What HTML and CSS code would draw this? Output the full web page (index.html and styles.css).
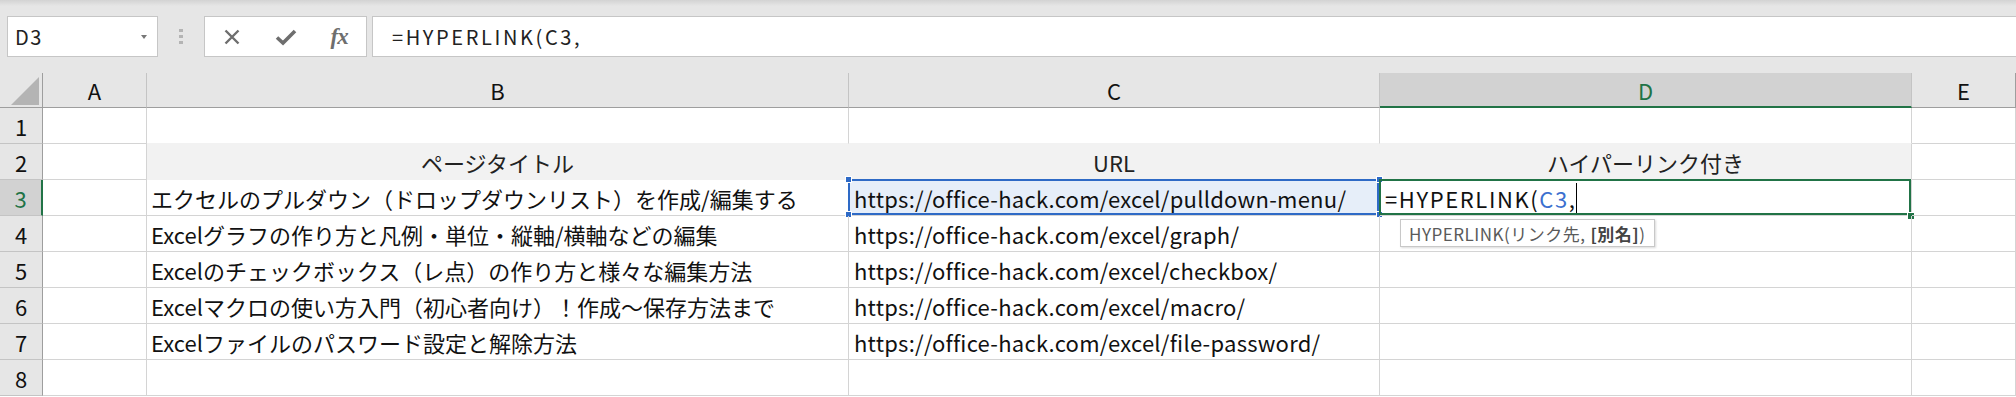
FILE: index.html
```html
<!DOCTYPE html>
<html lang="ja">
  <head>
    <meta charset="UTF-8" />
    <title>HYPERLINK</title>
    <link rel="stylesheet" href="styles.css">
  </head>
  <body>
    <div class="formula-bar">
      <div class="name-box">
        <span>D3</span>
        <span class="drop"></span>
      </div>
      <div class="grip"><i></i><i></i><i></i></div>
      <div class="fx-buttons">
        <span class="fx-btn">
          <svg width="18" height="18" viewBox="0 0 18 18">
            <path d="M2.5 2.5 L15.5 15.5 M15.5 2.5 L2.5 15.5" stroke="#6e6e6e" stroke-width="2.4" fill="none" />
          </svg>
        </span>
        <span class="fx-btn">
          <svg width="22" height="18" viewBox="0 0 22 18">
            <path d="M2 9.5 L8 15 L20 3" stroke="#6e6e6e" stroke-width="3.6" fill="none" />
          </svg>
        </span>
        <span class="fx-btn fx">fx</span>
      </div>
      <div class="formula-input">=HYPERLINK(C3,</div>
    </div>

    <div class="sheet">
      <!-- column headers -->
      <div class="corner"><span class="tri"></span></div>
      <div class="ch">A</div>
      <div class="ch">B</div>
      <div class="ch">C</div>
      <div class="ch ch-active">D</div>
      <div class="ch ch-last">E</div>

      <!-- row 1 -->
      <div class="rh">1</div>
      <div class="cell"></div>
      <div class="cell above-fill"></div>
      <div class="cell above-fill"></div>
      <div class="cell above-fill"></div>
      <div class="cell"></div>

      <!-- row 2 -->
      <div class="rh">2</div>
      <div class="cell"></div>
      <div class="cell th">ページタイトル</div>
      <div class="cell th">URL</div>
      <div class="cell th th-last">ハイパーリンク付き</div>
      <div class="cell"></div>

      <!-- row 3 -->
      <div class="rh rh-active">3</div>
      <div class="cell"></div>
      <div class="cell">エクセルのプルダウン（ドロップダウンリスト）を作成/編集する</div>
      <div class="cell url ref">
        https://office-hack.com/excel/pulldown-menu/
        <span class="ref-box"></span>
        <span class="knob tl"></span><span class="knob tr"></span>
        <span class="knob bl"></span><span class="knob br"></span>
      </div>
      <div class="cell edit">
        <span class="edit-text">=HYPERLINK(<span class="ref-text">C3</span>,</span><span class="caret"></span>
        <span class="active-box"></span>
        <span class="fill-handle"></span>
        <div class="tip">HYPERLINK(リンク先, <b>[別名]</b>)</div>
      </div>
      <div class="cell"></div>

      <!-- row 4 -->
      <div class="rh">4</div>
      <div class="cell"></div>
      <div class="cell">Excelグラフの作り方と凡例・単位・縦軸/横軸などの編集</div>
      <div class="cell url">https://office-hack.com/excel/graph/</div>
      <div class="cell"></div>
      <div class="cell"></div>

      <!-- row 5 -->
      <div class="rh">5</div>
      <div class="cell"></div>
      <div class="cell">Excelのチェックボックス（レ点）の作り方と様々な編集方法</div>
      <div class="cell url">https://office-hack.com/excel/checkbox/</div>
      <div class="cell"></div>
      <div class="cell"></div>

      <!-- row 6 -->
      <div class="rh">6</div>
      <div class="cell"></div>
      <div class="cell">Excelマクロの使い方入門（初心者向け）！作成～保存方法まで</div>
      <div class="cell url">https://office-hack.com/excel/macro/</div>
      <div class="cell"></div>
      <div class="cell"></div>

      <!-- row 7 -->
      <div class="rh">7</div>
      <div class="cell"></div>
      <div class="cell">Excelファイルのパスワード設定と解除方法</div>
      <div class="cell url">https://office-hack.com/excel/file-password/</div>
      <div class="cell"></div>
      <div class="cell"></div>

      <!-- row 8 -->
      <div class="rh">8</div>
      <div class="cell"></div>
      <div class="cell"></div>
      <div class="cell"></div>
      <div class="cell"></div>
      <div class="cell"></div>
    </div>
  </body>
</html>
```

FILE: styles.css
```css
* {
  box-sizing: border-box;
}
body {
  margin: 0;
  background: #fff;
  color: #111;
  font-family: "Noto Sans CJK JP", "Noto Sans", sans-serif;
  overflow: hidden;
}

/* formula bar */
.formula-bar {
  height: 73px;
  display: flex;
  align-items: flex-start;
  padding: 16px 0 0 7px;
  background: linear-gradient(#d3d3d3, #e6e6e6 6px);
}
.name-box {
  width: 151px;
  height: 41px;
  background: #fff;
  border: 1px solid #c6c6c6;
  display: flex;
  align-items: center;
  justify-content: space-between;
  padding: 0 10px 0 7px;
  font-size: 20px;
  letter-spacing: 1.5px;
  color: #222;
}
.drop {
  width: 0;
  height: 0;
  border-left: 3px solid transparent;
  border-right: 3px solid transparent;
  border-top: 4px solid #777;
}
.grip {
  width: 46px;
  height: 41px;
  display: flex;
  flex-direction: column;
  align-items: center;
  justify-content: center;
  gap: 3px;
}
.grip i {
  width: 4px;
  height: 3px;
  background: #b4b4b4;
}
.fx-buttons {
  width: 163px;
  height: 41px;
  background: #fff;
  border: 1px solid #c6c6c6;
  display: flex;
  align-items: center;
}
.fx-btn {
  flex: 1;
  display: flex;
  justify-content: center;
  align-items: center;
}
.fx {
  font-family: "Liberation Serif", serif;
  font-style: italic;
  font-weight: bold;
  font-size: 23px;
  color: #6e6e6e;
  letter-spacing: -1px;
}
.formula-input {
  flex: 1;
  height: 41px;
  margin-left: 5px;
  background: #fff;
  border: 1px solid #c6c6c6;
  border-right: none;
  display: flex;
  align-items: center;
  padding-left: 19px;
  font-size: 20px;
  letter-spacing: 2.6px;
  color: #222;
}

/* sheet */
.sheet {
  display: grid;
  grid-template-columns: 43px 104px 702px 531px 532px 104px;
  grid-template-rows: 35px;
  grid-auto-rows: 36px;
  font-size: 22px;
}
.corner {
  position: relative;
  background: #e6e6e6;
  border-right: 1px solid #9e9e9e;
  border-bottom: 1px solid #9e9e9e;
}
.tri {
  position: absolute;
  right: 3px;
  bottom: 2px;
  width: 0;
  height: 0;
  border-left: 28px solid transparent;
  border-bottom: 28px solid #b4b4b4;
}
.ch {
  background: #e6e6e6;
  border-right: 1px solid #c4c4c4;
  border-bottom: 1px solid #9e9e9e;
  display: flex;
  align-items: center;
  justify-content: center;
  color: #111;
}
.ch-active {
  background: #d2d2d2;
  color: #217346;
  border-bottom: 2px solid #217346;
}
.ch-last {
  border-right-color: #9e9e9e;
}
.rh {
  background: #e6e6e6;
  border-right: 1px solid #9e9e9e;
  border-bottom: 1px solid #c4c4c4;
  display: flex;
  align-items: center;
  justify-content: center;
}
.rh-active {
  background: #d2d2d2;
  color: #217346;
  border-right: 2px solid #217346;
}
.cell {
  position: relative;
  border-right: 1px solid #d4d4d4;
  border-bottom: 1px solid #d4d4d4;
  display: flex;
  align-items: center;
  padding-left: 4px;
  white-space: nowrap;
}
.above-fill {
  border-bottom-color: #f2f2f2;
}
.th {
  background: #f2f2f2;
  border-color: #f2f2f2;
  justify-content: center;
  padding-left: 0;
  color: #222;
}
.th-last {
  border-right-color: #d4d4d4;
}
.url {
  padding-left: 5px;
  letter-spacing: 0.25px;
}

/* referenced cell C3 */
.ref {
  background: #e6eef9;
}
.ref-box {
  position: absolute;
  top: -1px;
  left: -1px;
  right: 0;
  bottom: 0;
  border: 2px solid #2e6ac6;
}
.knob {
  position: absolute;
  width: 7px;
  height: 7px;
  background: #2e6ac6;
  border: 1px solid #fff;
}
.knob.tl { top: -4px; left: -4px; }
.knob.tr { top: -4px; right: -4px; }
.knob.bl { bottom: -3px; left: -4px; }
.knob.br { bottom: -3px; right: -4px; }

/* active cell D3 */
.edit {
  padding-left: 5px;
}
.edit-text {
  letter-spacing: 1.6px;
}
.ref-text {
  color: #3b6fcf;
}
.caret {
  width: 1px;
  height: 30px;
  background: #000;
}
.active-box {
  position: absolute;
  top: -1px;
  left: -1px;
  right: 0;
  bottom: 0;
  border: 2px solid #217346;
}
.fill-handle {
  position: absolute;
  right: -3px;
  bottom: -4px;
  width: 7px;
  height: 7px;
  background: #217346;
  border-left: 1px solid #fff;
  border-top: 1px solid #fff;
}
.tip {
  position: absolute;
  z-index: 2;
  top: 39px;
  left: 20px;
  height: 28px;
  padding: 0 8px;
  display: flex;
  align-items: center;
  background: #fff;
  border: 1px solid #c8c8c8;
  box-shadow: 1px 1px 2px rgba(0, 0, 0, 0.15);
  font-size: 17px;
  color: #5a5a5a;
  letter-spacing: 0.5px;
}
.tip b {
  margin-left: 5px;
  color: #444;
}
```
